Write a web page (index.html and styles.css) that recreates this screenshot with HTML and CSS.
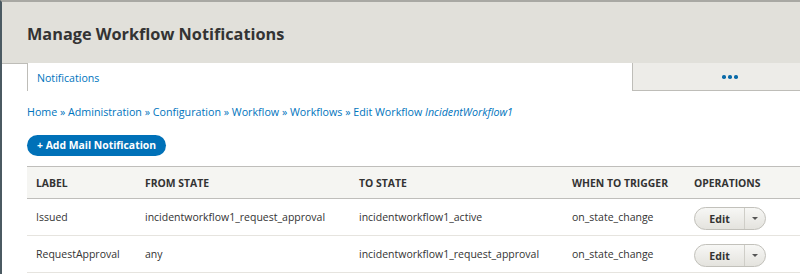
FILE: index.html
```html
<!DOCTYPE html>
<html>
<head>
<meta charset="utf-8">
<link rel="stylesheet" href="styles.css">
</head>
<body>
<div class="page">
  <header class="head">
    <h1 class="title">Manage Workflow Notifications</h1>
    <nav class="tabs">
      <a class="tab active">Notifications</a>
      <a class="tab more"><span class="dot"></span><span class="dot"></span><span class="dot"></span></a>
    </nav>
  </header>
  <main class="content">
    <div class="crumbs">
      <a>Home</a> » <a>Administration</a> » <a>Configuration</a> » <a>Workflow</a> » <a>Workflows</a> » <a>Edit Workflow <em>IncidentWorkflow1</em></a>
    </div>
    <div class="actions"><a class="btn-primary">+ Add Mail Notification</a></div>
    <table class="grid">
      <thead>
        <tr><th class="c1">Label</th><th class="c2">From state</th><th class="c3">To state</th><th class="c4">When to trigger</th><th class="c5">Operations</th></tr>
      </thead>
      <tbody>
        <tr><td>Issued</td><td>incidentworkflow1_request_approval</td><td>incidentworkflow1_active</td><td>on_state_change</td><td><div class="drop"><span class="edit">Edit</span><span class="arrow"></span></div></td></tr>
        <tr><td>RequestApproval</td><td>any</td><td>incidentworkflow1_request_approval</td><td>on_state_change</td><td><div class="drop"><span class="edit">Edit</span><span class="arrow"></span></div></td></tr>
      </tbody>
    </table>
  </main>
</div>
</body>
</html>
```
FILE: styles.css
```css
html, body { margin: 0; padding: 0; }
body {
  font-family: "Open Sans", "DejaVu Sans", sans-serif;
  background: #fff;
  color: #333;
  width: 800px;
  height: 276px;
  overflow: hidden;
}
.page {
  border-left: 2px solid #4b5a62;
  border-top: 2px solid #a8a8a3;
  min-height: 274px;
  box-sizing: border-box;
}
.head {
  background: #e1e0da;
  border-bottom: 1px solid #bebdb8;
  padding: 0 0 0 25px;
  height: 61px;
  display: flex;
  flex-direction: column;
  justify-content: flex-end;
  position: relative;
}
.title {
  margin: 0;
  font-size: 16.3px;
  font-weight: 700;
  color: #333;
  position: absolute;
  top: 21px;
  left: 25px;
  line-height: 22px;
}
.tabs {
  display: flex;
  height: 28px;
  margin-bottom: -28px;
}
.tab {
  box-sizing: border-box;
  height: 28px;
  font-size: 10.6px;
  color: #0074bd;
  display: flex;
  align-items: center;
  padding-top: 1px;
}
.tab.active {
  width: 605px;
  background: #fff;
  border-left: 1px solid #bebdb8;
  padding-left: 9px;
}
.tab.more {
  flex: 1;
  background: #edece8;
  border-left: 1px solid #bebdb8;
  border-bottom: 1px solid #bebdb8;
  justify-content: center;
  gap: 2.5px;
  padding-left: 27px;
}
.dot {
  width: 3.5px;
  height: 3.5px;
  background: #0a6aa8;
  border-radius: 50%;
}
.content {
  padding: 28px 0 0 25px;
}
.crumbs {
  font-size: 10.7px;
  color: #0074bd;
  line-height: 14px;
  margin-top: 13px;
}
.crumbs a { color: #0074bd; }
.crumbs em { font-style: italic; }
.actions {
  margin-top: 16px;
  display: flex;
}
.btn-primary {
  background: #0071b8;
  color: #fff;
  font-weight: 700;
  font-size: 10.4px;
  height: 21px;
  line-height: 21px;
  padding: 0 10px 0 10px;
  border-radius: 10.5px;
}
.grid {
  margin-top: 10px;
  border-collapse: collapse;
  width: 773px;
  font-size: 10.5px;
}
.grid th {
  background: #f5f5f2;
  border-top: 1px solid #bfbebb;
  border-bottom: 1px solid #bfbebb;
  text-transform: uppercase;
  font-weight: 700;
  font-size: 10.4px;
  color: #333;
  text-align: left;
  height: 31px;
  padding: 0 0 0 9px;
}
.grid td {
  border-bottom: 1px solid #e6e4df;
  height: 36px;
  padding: 0 0 0 9px;
  color: #333;
  line-height: 14px;
}
.c1 { width: 100px; }
.c2 { width: 205px; }
.c3 { width: 204px; }
.c4 { width: 113px; }
.drop {
  display: flex;
  margin-top: 3px;
  height: 23px;
  box-sizing: border-box;
  border: 1px solid #c2c1bb;
  border-radius: 11.5px;
  background: linear-gradient(#f7f7f5, #e4e3de);
  align-items: stretch;
  width: 72px;
}
.edit {
  width: 49px;
  display: flex;
  align-items: center;
  justify-content: center;
  font-weight: 700;
  font-size: 10.6px;
  color: #333;
  border-right: 1px solid #cfcec8;
}
.arrow {
  flex: 1;
  display: flex;
  align-items: center;
  justify-content: center;
}
.arrow::before {
  content: "";
  border-left: 3px solid transparent;
  border-right: 3px solid transparent;
  border-top: 3px solid #555;
}
```
